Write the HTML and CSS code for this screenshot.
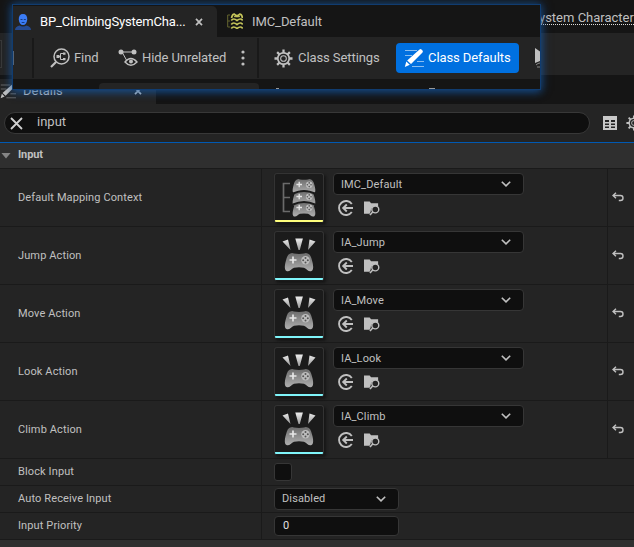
FILE: index.html
```html
<!DOCTYPE html>
<html lang="en">
<head>
<meta charset="utf-8">
<title>BP_ClimbingSystemCharacter</title>
<link rel="stylesheet" href="styles.css">
</head>
<body>
<svg class="defs" aria-hidden="true">
  <defs>
    <linearGradient id="metal" x1="0" y1="0" x2="0" y2="1"><stop offset="0" stop-color="#6c6c6c"/><stop offset="1" stop-color="#b0b0b0"/></linearGradient>
    <linearGradient id="ray" x1="0" y1="0" x2="0" y2="1"><stop offset="0" stop-color="#eee"/><stop offset="1" stop-color="#999"/></linearGradient>
    <symbol id="pad" viewBox="0 0 30 20">
      <path d="M7 .8Q8.500 .1 10 1.100Q15 1.800 20 1.100Q21.500 .1 23 .8C26 1.500 27 4 28 8C29.500 13 29.800 17.500 27.500 18.600C24.500 19.800 23 16.200 20 15.200Q15 14.500 10 15.200C7 16.200 5.500 19.800 2.500 18.600C.2 17.500 .5 13 2 8C3 4 4 1.500 7 .8Z" fill="url(#metal)"/>
      <path d="M9 4v7M5.500 7.500h7" stroke="#e6e6e6" stroke-width="1.700"/>
      <circle cx="21.500" cy="7.800" r="4.200" fill="#bdbdbd"/>
      <g fill="#555"><circle cx="21.500" cy="5.500" r="1"/><circle cx="21.500" cy="10.100" r="1"/><circle cx="19.200" cy="7.800" r="1"/><circle cx="23.800" cy="7.800" r="1"/></g>
    </symbol>
    <symbol id="action" viewBox="0 0 48 46">
      <path d="M7.500 9.500l5.500-2 2.500 10.500zM20.300 6.500h7.600L24.800 18h-1.300zM34.500 7.500l6 2L33 18z" fill="url(#ray)"/>
      <use href="#pad" x="9" y="20.500" width="30" height="20"/>
    </symbol>
    <symbol id="context" viewBox="0 0 48 46">
      <path d="M15 9.500H8.500v28H15M8.500 23.500H15" fill="none" stroke="#6a6a6a" stroke-width="1.700"/>
      <use href="#pad" x="17" y="4.500" width="24" height="16"/>
      <use href="#pad" x="17" y="16.500" width="24" height="16"/>
      <path d="M18 19.500q11-5 22 0" fill="none" stroke="#1b1b1b" stroke-width="2.200"/>
      <use href="#pad" x="17" y="27.500" width="24" height="16"/>
      <path d="M18 30.500q11-5 22 0" fill="none" stroke="#1b1b1b" stroke-width="2"/>
    </symbol>
    <symbol id="use" viewBox="0 0 16 16"><path d="M13.800 4A7 7 0 1 0 13.800 12M15 8H5.500M8.800 4.500L5.200 8l3.600 3.500" fill="none" stroke="#c0c0c0" stroke-width="1.900"/></symbol>
    <symbol id="browse" viewBox="0 0 17 16">
      <path d="M0 1h6l1.500 2H15v3.500a5.500 5.500 0 0 0-8 5.500l-1 2H0z" fill="#c0c0c0"/>
      <circle cx="12" cy="9.500" r="3.700" fill="#242424" stroke="#c0c0c0" stroke-width="1.500"/><path d="M9.500 12L6.300 15.500" stroke="#c0c0c0" stroke-width="1.700"/>
    </symbol>
    <symbol id="chev" viewBox="0 0 10 6"><path d="M.8.8L5 4.900 9.200.8" fill="none" stroke="#c0c0c0" stroke-width="1.600"/></symbol>
    <symbol id="reset" viewBox="0 0 12 10"><path d="M4 .8L1 3.500 4 6.300M1 3.500h7.500a2.500 2.500 0 0 1 0 5H6.800" fill="none" stroke="#c0c0c0" stroke-width="1.400"/></symbol>
    <symbol id="cross" viewBox="0 0 8 8"><path d="M1 .8L7 7.200M7 .8L1 7.200" stroke="currentColor" stroke-width="1.700"/></symbol>
    <symbol id="clear" viewBox="0 0 13 13"><path d="M1 1l11 11M12 1L1 12" stroke="#d0d0d0" stroke-width="1.800"/></symbol>
    <symbol id="gear" viewBox="0 0 20 20">
      <g stroke="currentColor" stroke-width="2.400"><path d="M10 .5v4M10 15.500v4M.5 10h4M15.500 10h4M3.300 3.300l2.800 2.800M13.900 13.900l2.800 2.800M3.300 16.700l2.800-2.800M13.900 6.100l2.800-2.800"/></g>
      <circle cx="10" cy="10" r="6" fill="#242424" stroke="currentColor" stroke-width="1.800"/><circle cx="10" cy="10" r="3" fill="none" stroke="currentColor" stroke-width="1.100"/>
    </symbol>
    <symbol id="pencil" viewBox="0 0 20 20">
      <path d="M1 2.500h12M1 7.500h7M13 13.500h7M8 18.500h12" stroke="currentColor" stroke-width=".9" opacity=".6"/>
      <path d="M15.500 1.500q1-.8 2 0l1 1q.8 1 0 2L7 16l-3.800-3.600zM2.300 13.500l3.500 3.300L.8 19z" fill="currentColor"/>
    </symbol>
  </defs>
</svg>

<div class="window">
  <div class="titlebar"><span class="parent">ystem Character</span></div>
  <div class="strip"><i class="strip-field"></i></div>
  <div class="tabs">
    <div class="details-tab">
      <svg class="details-icon"><use href="#pencil"/></svg>
      <span>Details</span>
      <svg class="details-close"><use href="#cross"/></svg>
    </div>
  </div>

  <div class="searchbar">
    <div class="search"><svg><use href="#clear"/></svg><span>input</span></div>
    <svg class="table-icon" viewBox="0 0 14 14"><path d="M0 0h14v14H0z" fill="#c8c8c8"/><path d="M2 4h4v2H2zM8 4h4v2H8zM2 7.500h4V9H2zM8 7.500h4V9H8zM2 10.500h4V12H2zM8 10.500h4V12H8z" fill="#242424"/></svg>
    <svg class="search-gear"><use href="#gear"/></svg>
  </div>

  <div class="category"><i class="arrow"></i>Input</div>

  <div class="row tall">
    <div class="label">Default Mapping Context</div>
    <div class="value"><div class="thumb yellow"><svg><use href="#context"/></svg></div>
      <div class="asset"><div class="select wide">IMC_Default<svg><use href="#chev"/></svg></div><div class="tools"><svg><use href="#use"/></svg><svg><use href="#browse"/></svg></div></div></div>
    <div class="revert"><svg><use href="#reset"/></svg></div>
  </div>
  <div class="row tall">
    <div class="label">Jump Action</div>
    <div class="value"><div class="thumb"><svg><use href="#action"/></svg></div>
      <div class="asset"><div class="select wide">IA_Jump<svg><use href="#chev"/></svg></div><div class="tools"><svg><use href="#use"/></svg><svg><use href="#browse"/></svg></div></div></div>
    <div class="revert"><svg><use href="#reset"/></svg></div>
  </div>
  <div class="row tall">
    <div class="label">Move Action</div>
    <div class="value"><div class="thumb"><svg><use href="#action"/></svg></div>
      <div class="asset"><div class="select wide">IA_Move<svg><use href="#chev"/></svg></div><div class="tools"><svg><use href="#use"/></svg><svg><use href="#browse"/></svg></div></div></div>
    <div class="revert"><svg><use href="#reset"/></svg></div>
  </div>
  <div class="row tall">
    <div class="label">Look Action</div>
    <div class="value"><div class="thumb"><svg><use href="#action"/></svg></div>
      <div class="asset"><div class="select wide">IA_Look<svg><use href="#chev"/></svg></div><div class="tools"><svg><use href="#use"/></svg><svg><use href="#browse"/></svg></div></div></div>
    <div class="revert"><svg><use href="#reset"/></svg></div>
  </div>
  <div class="row tall">
    <div class="label">Climb Action</div>
    <div class="value"><div class="thumb"><svg><use href="#action"/></svg></div>
      <div class="asset"><div class="select wide">IA_Climb<svg><use href="#chev"/></svg></div><div class="tools"><svg><use href="#use"/></svg><svg><use href="#browse"/></svg></div></div></div>
    <div class="revert"><svg><use href="#reset"/></svg></div>
  </div>
  <div class="row">
    <div class="label">Block Input</div>
    <div class="value"><i class="checkbox"></i></div>
    <div class="revert"></div>
  </div>
  <div class="row">
    <div class="label">Auto Receive Input</div>
    <div class="value"><div class="select">Disabled<svg><use href="#chev"/></svg></div></div>
    <div class="revert"></div>
  </div>
  <div class="row">
    <div class="label">Input Priority</div>
    <div class="value"><div class="number">0</div></div>
    <div class="revert"></div>
  </div>
</div>

<div class="overlay">
  <div class="overlay-clip">
    <div class="otabs">
      <div class="otab active">
        <svg class="person" viewBox="0 0 16 16"><path d="M8 0C5 0 3.600 2 3.800 5.500C4 9 5.500 11 8 11s4-2 4.200-5.500C12.400 2 11 0 8 0z" fill="#3b7cf5"/><path d="M0 16q0-3.500 4.500-4.500Q8 13.500 11.500 11.500Q16 12.500 16 16z" fill="#254a91"/><path d="M5.500 5.500h2M8.800 5.500h2M6.700 8.500h2.800" stroke="#173d83" stroke-width="1"/></svg>
        <span>BP_ClimbingSystemCha...</span>
        <svg class="close"><use href="#cross"/></svg>
      </div>
      <div class="otab">
        <svg class="imc" viewBox="0 0 16 16"><path d="M3 2H.7v12H3M.7 8H3" fill="none" stroke="#65652f"/><g fill="none" stroke="#c5c55a" stroke-width="1.700"><path d="M4.500 5Q5.500 .8 7.500 1.200L10 3.500 12.500 1.200Q14.800 1 15.500 5M7.500 4Q10 .8 12.500 4M4.300 7.500q2-3 5.700 0q3.700-3 5.700 0M4.300 11.500q2-3 5.700 0q3.700-3 5.700 0M4.300 15.500q2-3 5.700 0q3.700-3 5.700 0"/></g></svg>
        <span class="second-title">IMC_Default</span>
      </div>
    </div>
    <div class="otools">
      <i class="save"></i><i class="sep"></i>
      <div class="tool find">
        <svg viewBox="0 0 20 20" fill="none" stroke="#c0c0c0"><circle cx="11.500" cy="8.500" r="7.500" stroke-width="1.500"/><path d="M6 14L1 19" stroke-width="2.200"/><path d="M7 8.500h3.500M13 5.500h-2.500v6H13" stroke-width="1"/><path d="M6.500 7h3v3h-3zM13 4.500h2.500v2.300H13zM13 10h2.500v2.300H13z" fill="#c0c0c0" stroke="none"/></svg>
        <span>Find</span>
      </div>
      <div class="tool hide">
        <svg viewBox="0 0 20 18" fill="none" stroke="#c0c0c0"><path d="M3 3h13M4 3l5 9" stroke-width="1"/><circle cx="3" cy="3" r="2.500" fill="#c0c0c0" stroke="none"/><circle cx="16" cy="3" r="2.500" fill="#c0c0c0" stroke="none"/><path d="M7 13q5.800-7 12 0q-6.200 6.500-12 0z" fill="#242424" stroke-width="1.400"/><circle cx="13" cy="12.500" r="2" fill="#c0c0c0" stroke="none"/></svg>
        <span>Hide Unrelated</span>
      </div>
      <svg class="dots" viewBox="0 0 4 16"><g fill="#c0c0c0"><circle cx="2" cy="2" r="1.600"/><circle cx="2" cy="8" r="1.600"/><circle cx="2" cy="14" r="1.600"/></g></svg>
      <i class="sep second"></i>
      <div class="tool settings"><svg><use href="#gear"/></svg><span>Class Settings</span></div>
      <div class="tool defaults"><svg><use href="#pencil"/></svg><span>Class Defaults</span></div>
      <svg class="play" viewBox="0 0 5 20"><path d="M0 0l5 3.500v9.500L0 15z" fill="#c0c0c0"/><path d="M1 17q2-2 4-2M2 19h3" stroke="#888" fill="none"/></svg>
    </div>
    <div class="ofoot"><i class="foot-tab"></i><i class="tick"></i><i class="tick late"></i></div>
  </div>
</div>
</body>
</html>
```
FILE: styles.css
```css
* { box-sizing: border-box; }
body {
  margin: 0;
  width: 634px;
  height: 547px;
  overflow: hidden;
  position: relative;
  background: #2f2f2f;
  color: #c0c0c0;
  font: 11px/14px Roboto, "Liberation Sans", sans-serif;
}
svg { display: block; flex: none; }
i { display: block; flex: none; }
.defs { position: absolute; width: 0; height: 0; }

.titlebar { height: 33px; background: #151515; display: flex; padding: 10px 0 0 539px; overflow: hidden; }
.parent { height: 15px; line-height: 15px; font-size: 13px; white-space: nowrap; border-bottom: 1px dotted #ddd; }
.strip { height: 42px; background: #242424; display: flex; align-items: center; }
.strip-field { width: 2px; height: 28px; border: 1px solid #383838; border-left: 0; }
.tabs { height: 29px; background: #151515; padding-top: 4px; }
.details-tab { width: 156px; height: 25px; background: #242424; display: flex; align-items: center; font-size: 13px; padding-bottom: 2px; }
.details-icon { width: 16px; height: 16px; margin-right: 7px; }
.details-close { width: 8px; height: 8px; margin-left: auto; margin-right: 14px; }

.searchbar { height: 38px; background: #242424; display: flex; align-items: center; padding-left: 4px; }
.search { width: 586px; height: 22px; border: 1px solid #383838; border-radius: 11px; background: #0f0f0f; display: flex; align-items: center; padding-left: 5px; font-size: 13px; flex: none; }
.search svg { width: 13px; height: 13px; margin-right: 14px; }
.search span { padding-bottom: 2px; }
.table-icon { width: 14px; height: 14px; margin-left: 13px; }
.search-gear { width: 16px; height: 16px; margin-left: 9px; }

.category { height: 27px; border-top: 1px solid #0059b3; border-bottom: 1px solid #1a1a1a; background: #2f2f2f; display: flex; align-items: center; padding-bottom: 2px; font-weight: 700; letter-spacing: -.1px; }
.arrow { width: 18px; height: 6px; margin-top: 2px; }
.arrow::before { content: ""; display: block; width: 10px; height: 6px; margin-left: 1px; background: #858585; clip-path: polygon(0 0, 100% 0, 50% 100%); }

.row { height: 27px; display: grid; grid-template-columns: 261px 346px 27px; background: #242424; border-bottom: 1px solid #1a1a1a; }
.row.tall { height: 58px; }
.label { display: flex; align-items: center; padding-left: 18px; letter-spacing: .12px; }
.value { display: flex; align-items: center; border-left: 1px solid #1a1a1a; padding-left: 12px; }
.tall .value { align-items: flex-start; padding-top: 4px; }
.revert { padding-left: 4px; display: flex; align-items: center; }
.tall .revert { border-left: 1px solid #1a1a1a; padding-bottom: 2px; }
.revert svg { width: 12px; height: 10px; }
.thumb { width: 50px; height: 50px; border: 1px solid #333; border-bottom: 0; border-radius: 3px; background: #1b1b1b; box-shadow: 2px 2px 3px #151515; overflow: hidden; }
.thumb svg { width: 48px; height: 46px; }
.thumb::after { content: ""; display: block; height: 2px; background: #7ff5fa; }
.thumb.yellow::after { background: #ffff7d; }
.asset { margin-left: 9px; }
.select, .number { width: 125px; height: 22px; border: 1px solid #363636; border-radius: 4px; background: #0f0f0f; display: flex; align-items: center; padding: 0 12px 1px 7px; letter-spacing: .1px; }
.select svg { width: 10px; height: 6px; margin-left: auto; }
.select { letter-spacing: .12px; }
.select.wide { width: 191px; padding-top: 1px; padding-bottom: 0; }
.select.wide svg { margin-top: -1px; }
.number { height: 20px; padding-left: 8px; color: #e0e0e0; }
.checkbox { width: 18px; height: 18px; border: 1px solid #363636; border-radius: 3px; background: #0f0f0f; }
.tools { display: flex; gap: 10px; padding: 5px 0 0 5px; }
.tools svg { width: 16px; height: 16px; }

.overlay { position: absolute; left: 13px; top: 5px; width: 527px; height: 84px; box-shadow: 0 0 0 1px #103c70, 0 0 9px 2px #155cad99, 0 3px 8px #1461b966; }
.overlay-clip { height: 84px; overflow: hidden; font-size: 13px; line-height: 16px; letter-spacing: -.08px; }
.otabs { height: 32px; background: #151515; display: flex; }
.otab { display: flex; align-items: center; padding-left: 14px; }
.otab.active { width: 204px; padding-left: 2px; background: #242424; border-radius: 0 5px 0 0; margin-top: 1px; color: #fff; letter-spacing: -.17px; }
.otab span { white-space: nowrap; }
.otab .second-title { padding-top: 2px; }
.person { width: 16px; height: 16px; margin-right: 9px; }
.close { width: 8px; height: 8px; margin-left: auto; margin-right: 14px; color: #c0c0c0; }
.otab .imc { width: 16px; height: 16px; margin-left: -4px; margin-right: 9px; }
.otools { height: 42px; background: #242424; display: flex; align-items: center; }
.save { width: 1px; height: 14px; background: #52647a; }
.sep { width: 2px; height: 40px; background: #191919; margin-left: 18px; }
.tool { display: flex; align-items: center; white-space: nowrap; flex: none; }
.find { margin-left: 16px; width: 68px; }
.find svg { width: 20px; height: 20px; margin-right: 4px; }
.hide svg { width: 20px; height: 18px; margin-right: 4px; }
.hide { width: 123px; }
.dots { width: 4px; height: 16px; }
.second { margin-left: 12px; }
.settings { margin-left: 15px; width: 122px; }
.settings svg { width: 19px; height: 19px; margin-right: 5px; }
.defaults { width: 123px; height: 30px; padding-left: 8px; border-radius: 4px; background: #0070e0; color: #fff; }
.defaults svg { width: 20px; height: 20px; margin-right: 4px; }
.play { width: 5px; height: 20px; margin-left: auto; }
.ofoot { height: 10px; background: #151515; display: flex; padding-top: 4px; }
.foot-tab { width: 160px; height: 6px; margin-left: 86px; background: #242424; border-radius: 4px 4px 0 0; }
.tick { width: 3px; height: 1px; margin: 5px 0 0 17px; background: #999; }
.tick.late { width: 6px; margin-left: 150px; }
```
